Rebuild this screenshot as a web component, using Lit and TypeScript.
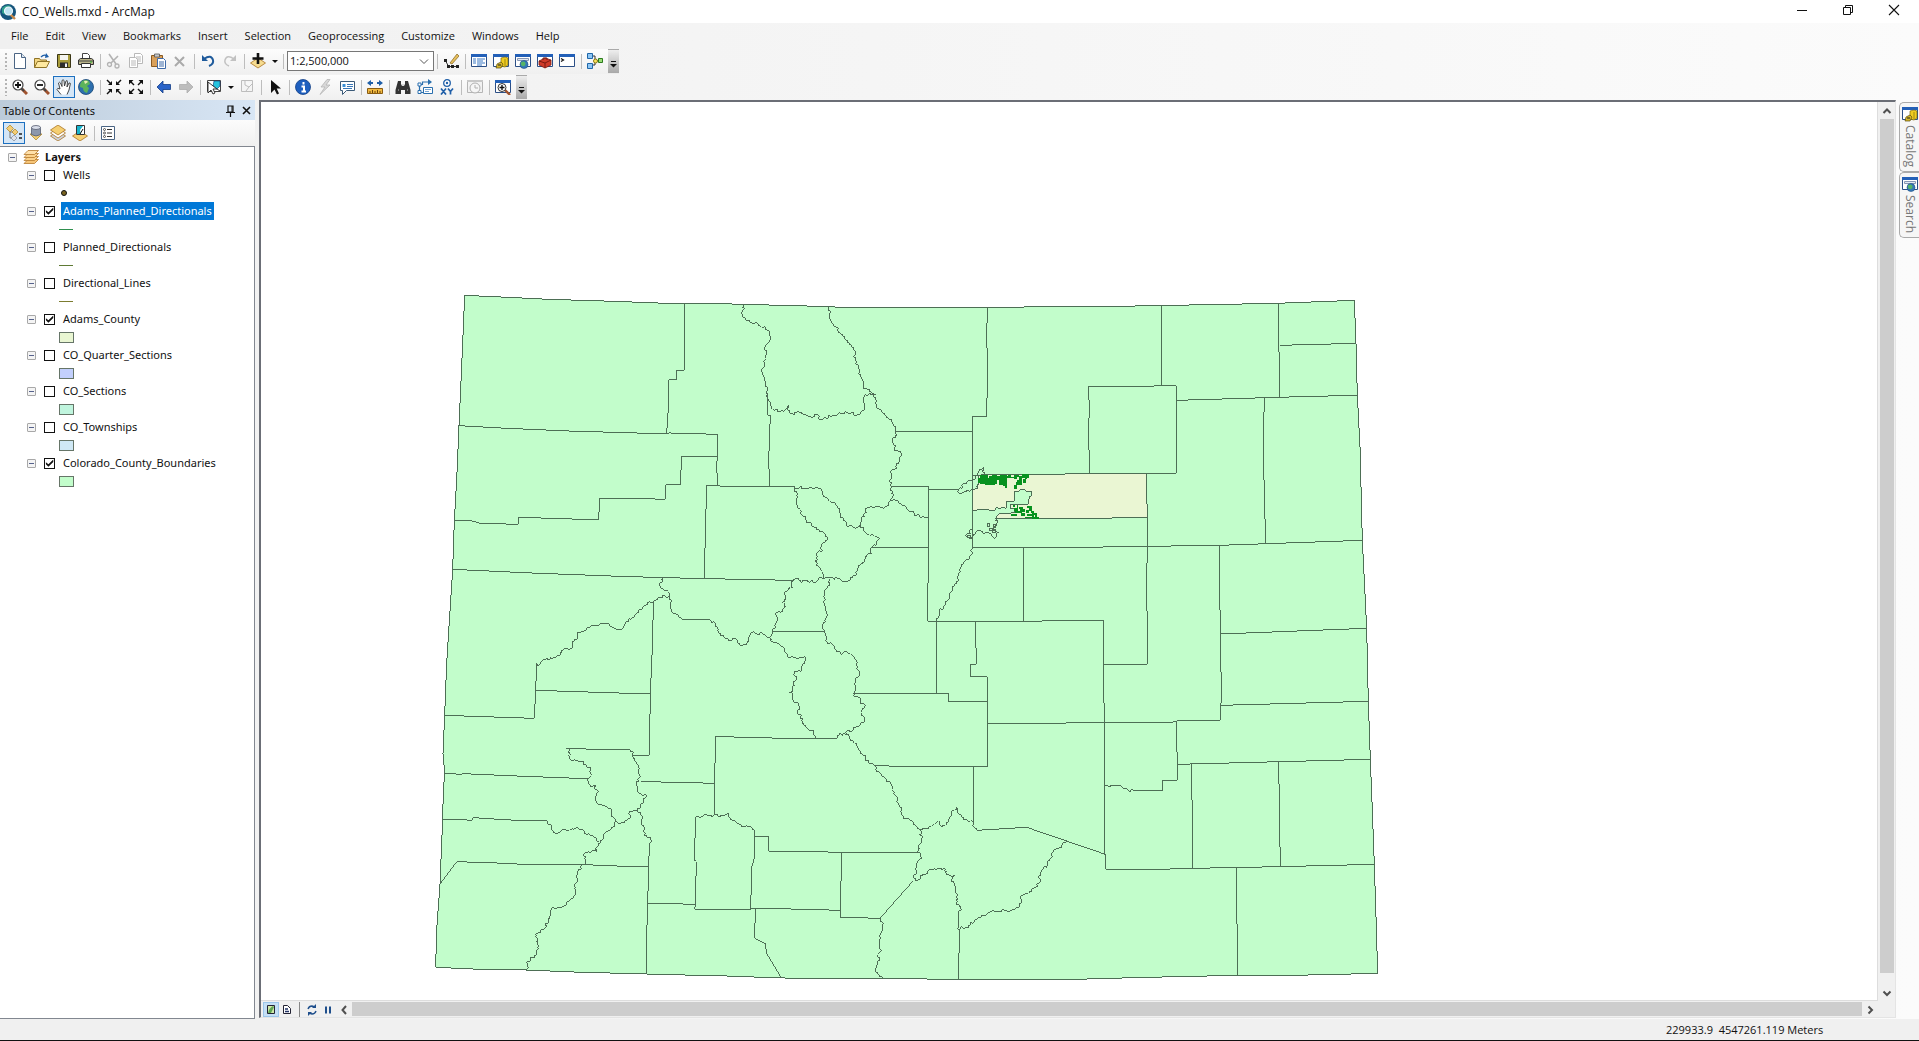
import { LitElement, html, svg, css, type SVGTemplateResult } from "lit";
import { customElement, state } from "lit/decorators.js";
import { classMap } from "lit/directives/class-map.js";

type Pt = [number, number];

/* ---------- map geometry ---------- */

// Tiles of the survey grid: a letter in a point list selects the tile origin.
const TILES: Record<string, Pt> = {
  A: [0, 0], B: [1410, 0], C: [0, 1050], D: [1410, 1050], E: [1530, 510],
};

function parse(list: string): Pt[] {
  let origin: Pt = [0, 0];
  const out: Pt[] = [];
  for (const token of list.trim().split(/\s+/)) {
    if (TILES[token]) { origin = TILES[token]; continue; }
    const [x, y] = token.split(",").map(Number);
    out.push([x + origin[0], y + origin[1]]);
  }
  return out;
}

// Breaks each segment with seeded midpoint displacement, for rivers and ridges.
function roughen(pts: Pt[]): Pt[] {
  let seed = 7;
  const rnd = () => ((seed = (seed * 16807) % 2147483647) / 2147483647) - 0.5;
  const out: Pt[] = [pts[0]];
  const split = (a: Pt, b: Pt) => {
    const dx = b[0] - a[0], dy = b[1] - a[1], len = Math.hypot(dx, dy);
    if (len < 7) { out.push(b); return; }
    const k = rnd() * Math.min(0.9, 12 / len);
    const m: Pt = [(a[0] + b[0]) / 2 - dy * k, (a[1] + b[1]) / 2 + dx * k];
    split(a, m);
    split(m, b);
  };
  for (let i = 1; i < pts.length; i++) split(pts[i - 1], pts[i]);
  return out;
}

const join = (pts: Pt[]) => pts.map((p) => p.map(Math.round).join(",")).join(" ");

const STATE = join(parse(`A 104,46 213,51 357,58 553,64 682,69 903,72 1131,78 1242,82 1440,82
 B 386,81 711,78 1131,70 1235,66 1363,61 1368,190 1372,345 1380,500 1387,781 1393,900 1400,1045
 D 1405,214 1411,388 1417,540 1423,703 1428,860 1433,1030 1235,1035 1012,1036 700,1043 530,1048 175,1048 75,1047
 C 1440,1045 1075,1045 1040,1042 895,1040 887,1036 760,1035 648,1032 430,1026 287,1020 150,1018 85,1015 17,1012
 20,900 30,762 38,568 40,480 44,430 39,370 44,256 50,100 A 57,1040 68,868 73,721 80,600 87,437 95,260`));

const STRAIGHT = [
  "A 765,68 763,270 740,271 739,300 716,299 714,400 710,460",
  "A 87,437 232,445 415,453 655,460 720,459 862,463 862,529 860,560 863,615",
  "A 862,529 754,529 752,615 707,614 706,658 640,656 509,655 506,720 400,716 266,712 265,733 150,730 120,721 73,721",
  "A 68,868 305,879 570,889 705,893 975,899 1090,901",
  "A 823,895 826,760 830,616 890,619 1092,619",
  "A 1012,340 1014,405 1021,406 1016,540 1019,619",
  "A 1398,454 B 217,454", "A 1384,620 B 85,619", "A 1325,802 B 83,802",
  "A 755,1018 838,1018", "A 1028,1054 1183,1056",
  "A 670,965 668,1080 C 665,100 661,192 658,376 608,376",
  "C 320,100 317,181 313,265 220,262 44,256", "C 317,181 505,187 661,192",
  "C 408,355 465,357 600,359", "C 44,430 95,433 100,431 260,438 470,446",
  "C 632,455 750,457 852,460", "C 853,552 855,400 857,319 940,322 1065,325 1220,326",
  "C 38,568 110,570 125,572 130,563 240,570 350,572",
  "C 30,762 80,695 200,699 280,703 440,703 560,708 655,710",
  "C 658,650 656,710 653,820 650,920 648,1032",
  "C 653,820 720,821 797,823", "C 797,562 793,690 799,695 796,823 794,838 962,838 962,835 1080,837 1231,841 1231,862 1350,865",
  "C 973,600 972,690 965,710 962,838", "C 973,619 1015,619 1016,664 1180,666 D 55,667",
  "C 1235,667 1231,841", "C 976,838 974,925 1005,940 1010,970 1052,1040",
  "C 1350,865 D 40,752", "D 175,848 174,897 178,900 176,1048",
  "D 232,601 380,592 613,672", "C 1335,407 D 82,411 262,411", "D 220,411 220,583",
  "B 110,1024 D 110,190", "C 1270,190 D 146,190 146,216 262,214",
  "B 262,82 260,180 263,250 260,409 217,409 217,800",
  "B 785,76 785,317", "B 566,319 700,319 829,317 829,580 740,580",
  "B 566,319 568,400 566,430 568,581", "B 829,361 1000,356 1200,350 1372,346",
  "B 1136,68 1138,352", "B 1139,196 1369,190", "B 1095,353 1091,410 1091,560 1097,792",
  "B 217,802 400,803 480,803 740,799 960,796 1387,781",
  "B 740,580 742,800 740,900 742,1080 D 742,103 612,103",
  "B 370,802 370,1024", "B 85,618 85,800 83,1024 440,1023 610,1021 610,1080 D 611,150 613,280 613,672 617,674 617,718 820,717 880,715 1140,710 1423,703",
  "B 958,796 961,1080 D 964,170 962,270 830,273 815,277 613,277 505,279 262,281",
  "D 262,411 262,140 212,140 212,103 229,103 227,0 B 226,1024",
  "B 962,1062 1399,1045", "D 962,226 1405,214", "D 830,273 832,451 788,451 788,481 705,481",
  "D 832,403 1411,388", "D 875,403 878,715", "D 1136,397 1141,710", "D 1010,712 1012,1036",
  "B 85,628 175,628", "B 217,586 235,586",
].map((s) => join(parse(s)));

const ROUGH = [
  "A 940,74 935,98 960,125 1005,138 1012,150 1022,172 1012,190 1007,230 997,265 1003,300 1012,330 1028,388 1060,395 1077,375 1092,404 1125,402 1145,414 1155,402 1180,416 1215,408 1255,398 1282,405 1303,375 1305,345 1337,343 1340,375 1385,425 1398,455 1390,490 1406,515 1400,565 1383,580 1384,620 1380,662",
  "A 1195,82 1198,110 1245,170 1275,225 1300,325 1320,330 1322,343",
  "A 1380,662 1405,662 B 15,677 30,695 85,711",
  "A 1380,662 1360,685 1305,687 1303,710 1288,738 1255,740 1240,720 1228,685 1195,660 1165,625 1107,624 1092,619",
  "A 1092,619 1100,665 1115,705 1145,730 1175,755 1192,770 1178,790 1178,812 1160,818 1162,850 1180,893",
  "A 1288,738 1305,755 1330,765 1348,775 1325,802 1325,820 1285,860 1250,905 1225,895 1180,895 1150,907 1100,893 1090,903 1088,922 1065,935 1062,985 1040,1010 1028,1050 1025,1078",
  "A 1200,897 1188,928 1188,985 1187,1025 1178,1035 1183,1056 C 1188,30 1210,45 1218,67 1245,65 1280,92 1283,110 1290,135 1278,150 1272,188 1290,210 1303,235 1290,285 1250,312 1228,310 1220,326",
  "A 700,893 687,912 715,935 718,948 670,965 620,1000 565,1048 530,1032 480,1040 435,1078 C 415,60 320,100",
  "A 718,948 720,980 755,1018",
  "A 838,1018 865,1048 870,1060 C 900,32 920,28 940,44 970,5 995,8 1020,32 1050,45 1072,77 1125,80 1128,90 1105,122 1092,125 1088,180 1077,188 1090,212 1105,225 1115,280 1155,323",
  "A 1025,1078 C 1022,30",
  "C 600,359 608,380 625,405 630,490 648,495 640,520 620,543 598,545 597,565 570,580 558,572 535,535 500,518 497,468 480,465 470,447 480,440 480,410 462,397 425,393 408,357",
  "C 350,572 370,608 400,598 455,598 490,620 507,635",
  "C 558,572 540,600 507,640 500,665 462,672 463,703 442,725 435,795 400,830 362,842 355,870 325,910 322,960 290,1020",
  "C 620,543 638,560 645,612 667,632 658,650",
  "C 797,562 853,555 897,550 910,572 940,590 973,600",
  "C 1350,865 1358,900 1350,950 1350,990 1338,1015 1357,1043",
  "C 1250,312 1300,375 1335,407 1382,460 1400,515 1425,565 D 25,565 60,600 65,625 55,667 42,745 48,752 60,738 120,715 155,740 165,738 155,750 168,780 172,815 187,840 175,848",
  "D 60,600 80,597 115,572 127,592 150,560 170,532 190,568 212,572 232,601",
  "D 705,481 670,475 640,467 613,469",
  "D 500,632 460,665 422,735 422,755 385,790 362,797 360,825 340,840 265,848 230,868 200,893 175,898",
  "B 217,802 205,840 190,850 170,910 130,980 110,1022",
  "B 253,584 252,562 238,572 235,585 220,600 205,603 190,612 188,622 175,630 178,640 188,638 200,630 217,628 232,626 235,612",
  "B 287,715 290,735 280,745 298,757 283,775 270,760 240,752 225,762 215,775 200,772 198,765 212,762 210,750 217,745",
].map((s) => join(roughen(parse(s))));

const ADAMS = join(parse(`B 235,586 250,584 500,582 680,582 740,580 740,630 742,713 640,713 630,715 287,715
 290,708 300,700 330,700 345,696 345,686 331,684 331,674 385,673 388,650 394,648 395,635 380,634 375,630 362,628
 356,634 343,636 343,664 320,664 318,685 305,682 300,686 290,682 285,690 270,692 262,688 217,691 217,628 232,626 235,610`));

// Planned directional wells: x, y, width, height in tile E.
const WELLS = [
  [113, 84, 20, 16], [121, 75, 24, 28], [134, 84, 14, 22], [146, 78, 18, 26], [156, 74, 14, 20], [166, 84, 6, 18],
  [172, 78, 10, 12], [180, 74, 20, 16], [178, 88, 12, 18], [190, 84, 10, 24], [186, 78, 20, 6], [196, 96, 6, 19],
  [204, 74, 10, 10], [210, 80, 16, 4], [222, 76, 10, 10], [230, 76, 6, 4], [238, 78, 8, 16], [230, 90, 16, 6], [227, 96, 18, 9], [222, 104, 8, 12],
  [246, 73, 22, 10], [248, 86, 10, 12], [254, 80, 8, 8],
  [218, 164, 8, 6], [222, 174, 10, 8], [230, 166, 4, 18], [236, 170, 14, 6], [240, 178, 16, 8], [226, 184, 20, 6], [244, 188, 12, 10],
  [260, 168, 16, 6], [268, 172, 8, 10], [258, 180, 8, 10], [272, 184, 10, 6], [262, 192, 14, 6], [276, 190, 6, 12],
  [214, 192, 16, 7], [254, 200, 22, 5], [280, 188, 10, 6], [284, 196, 6, 10], [276, 202, 21, 5],
];

const SPECKS = [[262, 732, 8, 8], [280, 734, 7, 8], [268, 745, 12, 7], [278, 750, 9, 9], [204, 766, 9, 7]];

/* ---------- icons, each on a 16 by 16 grid ---------- */

const frame = (body: SVGTemplateResult) => svg`
  <path d="M.5 1.5h15v12H.5z" fill="#fff" stroke="#2c4f86"/><path d="M0 1h16v3H0z" fill="#2360b8"/>${body}`;
const lens = (body: SVGTemplateResult) => svg`
  <path d="M10 10l5 5" stroke="#a0522d" stroke-width="3"/><path d="M9 9l3 3" stroke="#444" stroke-width="2"/>
  <circle cx="6" cy="6" r="5" fill="#fff" stroke="#444" stroke-width="1.2"/>${body}`;
const globe = (x: number, y: number, r: number) => svg`
  <circle cx=${x} cy=${y} r=${r} fill="#3478b8" stroke="#1d4f85" stroke-width=".6"/>
  <circle cx=${x - r / 5} cy=${y - r / 6} r=${r * 0.6} fill="#56b467"/>`;
const sheet = (c: string, x: number, y: number) => svg`
  <path transform="translate(${x} ${y})" d="M.5.5h6l2 2v8h-8z M2 4h5M2 6h5M2 8h5" fill="#fff" stroke=${c}/>`;
const diamond = (y: number, fill: string) => svg`
  <path transform="translate(0 ${y})" d="M8 0l7.500 5L8 10 .5 5z" fill=${fill} stroke="#a87425" stroke-width=".8"/>`;
const arrowIn = (t: string) => svg`<path transform=${t} d="M1 1l4 4" stroke="#111" stroke-width="1.500"/><path transform=${t} d="M6 2v4H2z" fill="#111"/>`;
const arrowOut = (t: string) => svg`<path transform=${t} d="M6 6L2 2" stroke="#111" stroke-width="1.500"/><path transform=${t} d="M1 5.500V1h4.500z" fill="#111"/>`;
const catalog = frame(svg`<path d="M8 5l4-1 3 1v7l-3 2-4-1z" fill="#f0cc20" stroke="#7c6a0c" stroke-width=".7"/>
  <path d="M12 6v7" stroke="#a18a12"/><path d="M4 11l4-2 2 2-2 4H3z" fill="#d6b72a" stroke="#5a4c0a" stroke-width=".7"/><path d="M5 12h3" stroke="#222"/>`);
const searchWin = frame(svg`<path d="M2.500 5.500h11v2h-11z" fill="#e3e9f2" stroke="#8797b4"/>${globe(9, 11.500, 4)}`);

const ICONS: Record<string, SVGTemplateResult> = {
  app: svg`<circle cx="8" cy="8" r="8" fill="#16547c"/><path d="M2 4q4-4 9-2l-3 3-2 6-4-2z" fill="#2f9e8d"/><path d="M10 10l5 5" stroke="#c98a4a" stroke-width="2.400"/><circle cx="8.500" cy="7" r="4" fill="#bfe4f2" stroke="#eef7fb" stroke-width="1.200"/>`,
  new: svg`<path d="M2.500.5h7l4 4v11h-11z" fill="#fff" stroke="#4b6584"/><path d="M9.500.5v4h4" fill="#dfe8f2" stroke="#4b6584"/>`,
  open: svg`<path d="M.5 14.500v-9h5l1 1.500h6v3" fill="#f3d681" stroke="#8f7327"/><path d="M.5 14.500l3-6h12l-3 6z" fill="#ffe9a0" stroke="#8f7327"/><path d="M7 4q3-3 6-1" fill="none" stroke="#1f5fa8" stroke-width="1.300"/><path d="M12 0l3 4-4 1z" fill="#1f5fa8"/>`,
  save: svg`<path d="M1.500 1.500h13v13h-12l-1-1z" fill="#a79b3a" stroke="#3a3616"/><path d="M4 2h8v5H4z" fill="#f4f4f0"/><path d="M4 9.500h8V14H4z" fill="#2d2d2d"/><path d="M9 10.500h2V14H9z" fill="#f4f4f4"/>`,
  print: svg`<path d="M4.500 6V.5h5l2 2V6" fill="#fff" stroke="#444"/><path d="M.5 7l2-1.500h11l2 1.500v4.500H.5z" fill="#b9b48a" stroke="#333"/><path d="M1 8h14" stroke="#444"/><path d="M3.500 10.500h9v4h-9z" fill="#fff" stroke="#333"/><path d="M12 9h2" stroke="#3b3"/>`,
  cut: svg`<path d="M3 1l7 10M12 3L5 10" stroke="#b3b3b3" stroke-width="1.600"/><circle cx="3.500" cy="11.500" r="2" fill="none" stroke="#b3b3b3" stroke-width="1.300"/><circle cx="11" cy="13" r="2" fill="none" stroke="#b3b3b3" stroke-width="1.300"/>`,
  copy: svg`${sheet("#b8b8b8", 6, 0)}${sheet("#b8b8b8", 1, 4)}`,
  paste: svg`<path d="M1.500 2.500h11v11h-11z" fill="#d9a05a" stroke="#8a5a22"/><path d="M4.500 1h5v3h-5z" fill="#c8c8c8" stroke="#555" stroke-width=".8"/>${sheet("#3f6aa8", 7, 5)}`,
  del: svg`<path d="M3 4l9 9M12 4l-9 9" stroke="#aaa" stroke-width="2"/>`,
  undo: svg`<path d="M4 6q7-5 9 1 1 4-4 6" fill="none" stroke="#1f5b9c" stroke-width="2"/><path d="M2 2v6h6z" fill="#1f5b9c"/>`,
  redo: svg`<path d="M12 6Q5 1 3 7q-1 4 4 6" fill="none" stroke="#c2c2c2" stroke-width="1.500"/><path d="M14 2v6H8z" fill="#c2c2c2"/>`,
  add: svg`${diamond(5, "#f6dc90")}<path d="M8 0v11M2.500 5.500h11" stroke="#111" stroke-width="2.600"/>`,
  edit: svg`<path d="M2.500 7.500l3 6h9" fill="none" stroke="#333"/><path d="M1 6h3v3H1zM4 12h3v3H4zM8 12h3v3H8zM13 12h3v3h-3z" fill="#222"/><path d="M7 10l7-9 2 2-7 8z" fill="#e6bf5c" stroke="#84611b" stroke-width=".7"/>`,
  table: frame(svg`<path d="M2 6h3M2 8h3M2 10h3M6 6h8M6 8h6M6 10h8M6 12h5" stroke="#3b78c4"/>`),
  catalog,
  search: searchWin,
  toolbox: frame(svg`<path d="M2 8l6-3 6 2v5l-6 3-6-3z" fill="#cf3b2a" stroke="#7a1a10" stroke-width=".8"/><path d="M2 8l6 2 6-3M8 10v5M6 7V5h4v2" fill="none" stroke="#7a1a10"/>`),
  python: frame(svg`<path d="M2 5.500l2.500 1.500L2 8.500" fill="none" stroke="#111" stroke-width="1.200"/>`),
  model: svg`<path d="M5 3h3v9H5M8 7.500h4" fill="none" stroke="#333"/><path d="M.5.5h5v5h-5zM.5 10.500h5v5h-5z" fill="#8ec6f4" stroke="#1f66a8"/><circle cx="8.500" cy="8" r="2" fill="#f8e45c" stroke="#8a7610"/><path d="M11.500 5.500h4v4h-4z" fill="#9ade76" stroke="#2d7a1e"/>`,
  zoomin: lens(svg`<path d="M6 3v6M3 6h6" stroke="#111" stroke-width="1.800"/>`),
  zoomout: lens(svg`<path d="M3 6h6" stroke="#111" stroke-width="1.800"/>`),
  pan: svg`<path d="M5 15.500L1 10.500q0-2 3-.5L2.500 4q1-1.500 2 0L6 7.500 6 1.500q1.200-1.500 2 0l.5 5.500 1.500-5q1.500-1 1.500.5L11 8l2-4q1.500-.5 1.300 1L13 11l-2 4.500" fill="#fff" stroke="#333" stroke-width=".9"/>`,
  globe: svg`<circle cx="8" cy="8" r="7.500" fill="#2d6fae" stroke="#174675" stroke-width=".8"/><path d="M4 2q4-2 7 0l1 3-3 2 2 2-2 5q-4-1-4-5L2 8q0-4 2-6z" fill="#5cb35a"/><path d="M6 2q3-1 4 1L7 5z" fill="#e8edb4"/>`,
  fixin: svg`${arrowIn("translate(0 0)")}${arrowIn("translate(16 0) scale(-1 1)")}${arrowIn("translate(0 16) scale(1 -1)")}${arrowIn("translate(16 16) scale(-1 -1)")}`,
  fixout: svg`${arrowOut("translate(0 0)")}${arrowOut("translate(16 0) scale(-1 1)")}${arrowOut("translate(0 16) scale(1 -1)")}${arrowOut("translate(16 16) scale(-1 -1)")}`,
  back: svg`<path d="M1 8l6-6v3.500h7.500v5H7V14z" fill="#2a63c8" stroke="#123c86" stroke-width=".8"/>`,
  forward: svg`<path d="M15 8L9 2v3.500H1.500v5H9V14z" fill="#bdbdbd" stroke="#adadad" stroke-width=".8"/>`,
  select: svg`<path d="M1.500 1.500h13v11h-13z" fill="#fff" stroke="#444"/><path d="M8 2h6v5l-3 3-4-3z" fill="#27c3dd" stroke="#137" stroke-width=".6"/><path d="M11 10l3 2" stroke="#333"/><path d="M2 3v11l3-3 2 4 2-1-2-4h4z" fill="#fff" stroke="#222" stroke-width=".9"/>`,
  clear: svg`<path d="M2.500 1.500h11v11h-11zM6 2v4l4 2 3-3M10 8l-3 4" fill="#f4f4f4" stroke="#bdbdbd"/>`,
  pointer: svg`<path d="M4 1v13l3.500-3.500L10 15.500l2-1-2.300-5H14z" fill="#111"/>`,
  info: svg`<circle cx="8" cy="8" r="7.500" fill="#1e5fbf" stroke="#123f85" stroke-width=".8"/><path d="M8.500 3v2.500M6.500 7.500h2.500v5M6.500 12.500h4.500" fill="none" stroke="#fff" stroke-width="2"/>`,
  bolt: svg`<path d="M10 .5L4 8h4l-5 7.500L13 6H9l4-5.500z" fill="#d8d8d8" stroke="#b5b5b5" stroke-width=".8"/>`,
  popup: svg`<path d="M1.500 2.500h14v9h-8l-4 4v-4h-2z" fill="#fff" stroke="#3b5a78"/><path d="M3.500 5h3v3h-3z" fill="#3a8fd6"/><path d="M8 5.500h6M8 7.500h6M4 9.500h9" stroke="#3a78b8"/>`,
  measure: svg`<path d="M.5 9.500h15v5H.5z" fill="#f0b840" stroke="#8a5c12"/><path d="M3 12v2M5.500 11v3M8 12v2M10.500 11v3M13 12v2" stroke="#6b450a"/><path d="M0 4l4-3v2h2v2H4v2zM16 4l-4-3v2h-2v2h2v2z" fill="#1f5fa8"/>`,
  find: svg`<path d="M3 2h3v3l1 2h2l1-2V2h3l2.500 9v4H10v-4H6v4H.5v-4z" fill="#333"/><path d="M3 11h1M12 11h1M7 6h2" stroke="#bbb"/>`,
  route: svg`<path d="M2.500 11V5.500h3V3H12M2.500 13.500h4" fill="none" stroke="#2a6fae" stroke-width="1.200"/><path d="M11 0l4 3-4 3z" fill="#2a6fae"/><path d="M1 4h3v3H1zM1 11.500h3v3H1z" fill="#fff" stroke="#2a6fae"/><path d="M6.500 8.500h9v6h-9z" fill="#fff" stroke="#2a6fae"/><path d="M8 10.500h6M8 12.500h4" stroke="#7aa8d4"/>`,
  xy: svg`<circle cx="8" cy="4" r="3.300" fill="#fff" stroke="#1f5fa8" stroke-width="1.300"/><circle cx="8" cy="4" r="1.200" fill="#1f5fa8"/><path d="M2 9.500l5 6M7 9.500l-5 6M9 9.500l2.500 3 2.500-3M11.500 12v3.500" fill="none" stroke="#1f5fa8" stroke-width="1.700"/>`,
  time: svg`<path d="M.5 1.500h15v12H.5z" fill="#f2f2f2" stroke="#b5b5b5"/><path d="M0 1h16v2H0z" fill="#c8c8c8"/><circle cx="8" cy="9" r="5" fill="#f6f6f6" stroke="#b0b0b0"/><path d="M8 6v3h3" fill="none" stroke="#b0b0b0"/>`,
  viewer: frame(svg`<path d="M10 11l5 5" stroke="#a0522d" stroke-width="2.400"/><circle cx="7" cy="8.500" r="4" fill="#fff" stroke="#333"/><path d="M7 6v5M4.500 8.500h5" stroke="#111" stroke-width="1.400"/>`),
  layers: svg`<path d="M1 14.500l4-4h10.500l-4 4z" fill="#f6c577" stroke="#b67a2c" stroke-width=".8"/><path d="M1 11.500l4-4h10.500l-4 4z" fill="#fbd28c" stroke="#b67a2c" stroke-width=".8"/><path d="M1 8.500l4-4h10.500l-4 4z" fill="#fbd28c" stroke="#b67a2c" stroke-width=".8"/><path d="M1 5.500l4-4h10.500l-4 4z" fill="#ffe0a8" stroke="#b67a2c" stroke-width=".8"/>`,
  order: svg`<path d="M4 6v7h6M4 7h5" fill="none" stroke="#777"/><path d="M4 0l3.500 3.500L4 7 .5 3.500z" fill="#f3cd74" stroke="#b08a35" stroke-width=".8"/><path d="M9 4l3 3-3 3-3-3z" fill="#f3cd74" stroke="#b08a35" stroke-width=".8"/><path d="M8 10l3 3-3 3-3-3z" fill="#dfe3ea" stroke="#8b93a3" stroke-width=".8"/><path d="M13 9h3M13 13h3" stroke="#222" stroke-width="1.300"/>`,
  source: svg`<path d="M2 9h12l-6 6z" fill="#f3cd74" stroke="#b08a35" stroke-width=".8"/><path d="M3.500 2.500v7q4.500 3 9 0v-7z" fill="#8d97ab" stroke="#555d70" stroke-width=".8"/><ellipse cx="8" cy="2.500" rx="4.500" ry="2" fill="#d9deea" stroke="#555d70" stroke-width=".8"/>`,
  visible: svg`${diamond(6, "#cfd3dc")}${diamond(3, "#fff")}${diamond(0, "#f5cf72")}`,
  selection: svg`${diamond(6, "#f5cf72")}<path d="M4.500.5h8v9h-8z" fill="#fff" stroke="#333"/><path d="M5 1h6L8 5l1 4H5z" fill="#18b4cc"/><path d="M11 4l-3 5" stroke="#111"/>`,
  options: svg`<path d="M1.500 1.500h13v13h-13z" fill="#fff" stroke="#4b6584"/><circle cx="4.500" cy="4.500" r="1" fill="none" stroke="#333" stroke-width=".8"/><circle cx="4.500" cy="8" r="1" fill="none" stroke="#333" stroke-width=".8"/><circle cx="4.500" cy="11.500" r="1" fill="none" stroke="#333" stroke-width=".8"/><path d="M7 4.500h5M7 8h5M7 11.500h5" stroke="#333"/>`,
  pin: svg`<path d="M6 3h5v6H6zM4 9.500h9M8.500 10v4" fill="none" stroke="#111" stroke-width="1.200"/><path d="M10 3v6" stroke="#111"/>`,
  close: svg`<path d="M5 4l7 7M12 4l-7 7" stroke="#111" stroke-width="1.600"/>`,
  winmin: svg`<path d="M3 8.500h10" stroke="#111"/>`,
  winmax: svg`<path d="M3.500 5.500h7v7h-7zM5.500 5V3.500h7v7H11" fill="none" stroke="#111"/>`,
  winclose: svg`<path d="M3 3l10 10M13 3L3 13" stroke="#111" stroke-width="1.100"/>`,
  up: svg`<path d="M4.500 10L8 6.500l3.500 3.500" fill="none" stroke="#505050" stroke-width="2"/>`,
  down: svg`<path d="M4.500 6.500L8 10l3.500-3.500" fill="none" stroke="#505050" stroke-width="2"/>`,
  left: svg`<path d="M10 4L6.500 8l3.500 4" fill="none" stroke="#505050" stroke-width="2"/>`,
  right: svg`<path d="M6.500 4.500L10 8l-3.500 3.500" fill="none" stroke="#505050" stroke-width="2"/>`,
  combo: svg`<path d="M4 6.500L8 10.500l4-4" fill="none" stroke="#555"/>`,
  dataview: svg`<path d="M4.500 3.500h7v8h-7z" fill="#cfe8a8" stroke="#223"/><path d="M5 11q1-5 5-7l1 1-3 6z" fill="#5ea552"/>`,
  layout: svg`<path d="M4.500 3.500h4l3 3v5h-7z" fill="#fff" stroke="#223"/><path d="M6 7h3M6 9.500h4" stroke="#236" stroke-width="1.300"/>`,
  refresh: svg`<path d="M4 7q1-3 4-3l3 1M12 9q-1 3-4 3l-3-1" fill="none" stroke="#1f4f8c" stroke-width="1.400"/><path d="M12 2v4H8zM4 14v-4h4z" fill="#1f4f8c"/>`,
  pause: svg`<path d="M6 4.500v7M10 4.500v7" stroke="#1f4f8c" stroke-width="2"/>`,
};

const icon = (name: string) => html`<svg class="icon" width="16" height="16" viewBox="0 0 16 16" aria-hidden="true">${ICONS[name]}</svg>`;

/* ---------- content ---------- */

const MENUS = ["File", "Edit", "View", "Bookmarks", "Insert", "Selection", "Geoprocessing", "Customize", "Windows", "Help"];

type Tool = { icon: string; label: string } | "|" | "v";
const t = (name: string, label: string): Tool => ({ icon: name, label });

const STANDARD_A: Tool[] = [t("new", "New"), t("open", "Open"), t("save", "Save"), t("print", "Print"), "|",
  t("cut", "Cut"), t("copy", "Copy"), t("paste", "Paste"), t("del", "Delete"), "|", t("undo", "Undo"), t("redo", "Redo"), "|", t("add", "Add Data"), "v", "|"];
const STANDARD_B: Tool[] = ["|", t("edit", "Editor Toolbar"), "|", t("table", "Table Of Contents"), t("catalog", "Catalog"),
  t("search", "Search"), t("toolbox", "ArcToolbox"), t("python", "Python"), "|", t("model", "ModelBuilder")];
const TOOLS: Tool[] = [t("zoomin", "Zoom In"), t("zoomout", "Zoom Out"), t("pan", "Pan"), t("globe", "Full Extent"), "|",
  t("fixin", "Fixed Zoom In"), t("fixout", "Fixed Zoom Out"), "|", t("back", "Previous Extent"), t("forward", "Next Extent"), "|",
  t("select", "Select Features"), "v", t("clear", "Clear Selection"), "|", t("pointer", "Select Elements"), "|",
  t("info", "Identify"), t("bolt", "Hyperlink"), t("popup", "HTML Popup"), "|", t("measure", "Measure"), "|",
  t("find", "Find"), t("route", "Find Route"), t("xy", "Go To XY"), "|", t("time", "Time Slider"), "|", t("viewer", "Viewer Window")];
const TOC_TOOLS: Tool[] = [t("order", "List By Drawing Order"), t("source", "List By Source"), t("visible", "List By Visibility"),
  t("selection", "List By Selection"), "|", t("options", "Options")];

interface Layer { name: string; on: boolean; kind: "point" | "line" | "fill"; color: string }

@customElement("app-root")
export class AppRoot extends LitElement {
  @state() private tool = "pan";
  @state() private selected = "Adams_Planned_Directionals";
  @state() private layers: Layer[] = [
    { name: "Wells", on: false, kind: "point", color: "#7a6420" },
    { name: "Adams_Planned_Directionals", on: true, kind: "line", color: "#2f8f4e" },
    { name: "Planned_Directionals", on: false, kind: "line", color: "#5f7a35" },
    { name: "Directional_Lines", on: false, kind: "line", color: "#7c7c30" },
    { name: "Adams_County", on: true, kind: "fill", color: "#e9f6d2" },
    { name: "CO_Quarter_Sections", on: false, kind: "fill", color: "#c2cffc" },
    { name: "CO_Sections", on: false, kind: "fill", color: "#c0f5de" },
    { name: "CO_Townships", on: false, kind: "fill", color: "#cfe8f5" },
    { name: "Colorado_County_Boundaries", on: true, kind: "fill", color: "#c2fdcb" },
  ];

  static styles = css`
    :host { display: flex; flex-direction: column; height: 100vh; box-sizing: border-box; overflow: hidden;
      border-bottom: 1px solid #111; font: 11px/18px "Open Sans", "Noto Sans", sans-serif; color: #111;
      background: linear-gradient(90deg, #f0f0f0, #fbfbfb); }
    * { box-sizing: border-box; }
    button, select { font: inherit; color: inherit; }
    button { padding: 0; border: 1px solid transparent; background: none; display: flex; align-items: center; justify-content: center; }
    .icon { display: block; flex: none; }
    .title { display: flex; align-items: center; height: 23px; padding-right: 2px; background: #fff; font-size: 12px; }
    .title h1 { flex: 1; margin: 0 6px; font: inherit; }
    .title button { width: 46px; height: 23px; padding-bottom: 4px; }
    .menu { display: flex; gap: 3px; height: 25px; padding: 0 4px; align-items: center; }
    .menu button { height: 22px; padding: 0 6px; }
    .bar { display: flex; align-items: center; height: 26px; }
    .strip { display: flex; align-items: center; height: 25px; background: linear-gradient(#fcfcfc, #f0f0f0); }
    .grip { width: 2px; height: 17px; margin: 0 2px 0 5px; background: repeating-linear-gradient(#b4b4b4 0 2px, transparent 2px 4px); }
    .tool { width: 22px; height: 22px; flex: none; }
    .tool.on { border-color: #1d70c0; background: #d5e6f6; }
    .sep { width: 1px; height: 15px; margin: 0 2px 0 3px; background: #bdbdbd; flex: none; }
    .drop { width: 11px; height: 22px; }
    .drop::before { content: ""; border: 3px solid transparent; border-top-color: #111; border-bottom: 0; }
    .more { width: 11px; height: 25px; margin-left: 2px; align-items: flex-end; padding-bottom: 4px; background: linear-gradient(#eee, #a8a8a8); }
    .scale { display: flex; align-items: center; position: relative; margin-left: 1px; }
    .scale select { width: 147px; height: 20px; padding: 0 2px; border: 1px solid #777; border-radius: 0; background: #fff; appearance: none; font-size: 11px; }
    .scale .icon { position: absolute; right: 2px; pointer-events: none; }
    .work { flex: 1; display: flex; min-height: 0; }
    .toc { width: 255px; flex: none; display: flex; flex-direction: column; font-family: "Noto Sans", "Open Sans", sans-serif; }
    .head { display: flex; align-items: center; height: 20px; padding: 1px 1px 0 3px; background: linear-gradient(90deg, #bccbda, #d8e6f5); }
    .head h2 { flex: 1; margin: 0; font: inherit; }
    .head button { width: 16px; height: 18px; }
    .toctools { display: flex; align-items: center; height: 26px; padding-left: 3px; background: linear-gradient(#fcfcfc, #f0f0f0); }
    .tree { flex: 1; margin: 0; padding: 1px 0 0; list-style: none; background: #fff; border: 1px solid #828790; border-left: 0; }
    .row { display: flex; align-items: center; height: 18px; }
    .root { padding-left: 8px; font-weight: 700; gap: 6px; }
    .child { padding-left: 27px; }
    .exp { width: 9px; height: 9px; flex: none; border: 1px solid #a8a8a8; border-radius: 1px; background: linear-gradient(#56628c, #56628c) center / 5px 1px no-repeat #f4f4f4; }
    .child .exp { margin-right: 8px; }
    .child input { appearance: none; width: 11px; height: 11px; margin: 0 6px 0 0; border: 1px solid #111; background: #fff; }
    .child input:checked::before { content: ""; display: block; width: 9px; height: 9px; background: #111;
      clip-path: polygon(10% 42%, 10% 65%, 38% 92%, 92% 38%, 92% 12%, 38% 64%); }
    .name { padding: 0 2px; }
    .name.on { background: #0078d7; color: #fff; }
    .symbol { padding-left: 59px; }
    .dot { width: 6px; height: 6px; margin-left: 2px; background: #7a6420; border: 1px solid #111; border-radius: 50%; }
    .line { width: 14px; height: 1px; }
    .fill { width: 15px; height: 11px; border: 1px solid #667568; }
    .mapframe { flex: 1; min-width: 0; display: grid; grid-template: minmax(0, 1fr) 16px / minmax(0, 1fr) 17px;
      margin: 0 3px 1px 4px; border: 1px solid #e4e4e4; border-top: 2px solid #6b6e76; border-left: 2px solid #6b6e76; background: #f0f0f0; }
    .map { display: block; width: 100%; height: 100%; background: #fff; border-right: 1px solid #ddd; border-bottom: 1px solid #ddd; }
    .vscroll { display: flex; flex-direction: column; align-items: center; padding: 1px 1px 0 2px; }
    .vscroll button { width: 14px; height: 16px; }
    .thumb { flex: 1; background: #cdcdcd; align-self: stretch; }
    .vscroll .thumb { margin-bottom: 12px; }
    .hscroll { display: flex; align-items: center; padding: 1px 0 0 2px; }
    .hscroll button { width: 16px; height: 15px; }
    .hscroll .sep { margin: 0 4px; background: #888; }
    .hscroll .on { background: #c4dff5; border-color: #9cc6ea; }
    .hscroll .thumb { height: 14px; }
    .dock { width: 20px; flex: none; display: flex; flex-direction: column; padding-top: 2px; }
    .dock button { writing-mode: vertical-rl; gap: 3px; justify-content: flex-start; padding: 3px 0 4px; border: 1px solid #aaa; border-right: 0; border-radius: 5px 0 0 5px; background: #f6f6f6; color: #777; font-size: 12px; }
    .status { display: flex; justify-content: flex-end; height: 21px; align-items: center; background: #f0f0f0; }
    .status output { width: 253px; white-space: pre; }
  `;

  private tools(list: Tool[]) {
    return list.map((item) => item === "|" ? html`<span class="sep"></span>`
      : item === "v" ? html`<button class="drop" aria-label="More choices"></button>`
      : html`<button class=${classMap({ tool: true, on: item.icon === this.tool || item.icon === "order" })}
          aria-label=${item.label} @click=${() => (this.tool = item.icon)}>${icon(item.icon)}</button>`);
  }

  private more() {
    return html`<button class="more" aria-label="Toolbar options"><svg class="icon" width="7" height="8" viewBox="0 0 7 8"><path d="M1 .5h5" stroke="#111"/><path d="M0 3h7L3.500 6.500z" fill="#111"/></svg></button>`;
  }

  private toggle(layer: Layer) {
    this.layers = this.layers.map((l) => (l === layer ? { ...l, on: !l.on } : l));
  }

  private shown(name: string) {
    return this.layers.some((l) => l.name === name && l.on);
  }

  private symbol(l: Layer) {
    return l.kind === "point" ? html`<span class="dot"></span>`
      : html`<span class=${l.kind} style="background:${l.color}"></span>`;
  }

  private map() {
    return html`<svg class="map" role="img" aria-label="Colorado county map" shape-rendering="crispEdges">
      <g transform="translate(169 178) scale(.33333)" fill="none" stroke="#4d6e55" stroke-width="3">
        ${this.shown("Colorado_County_Boundaries") ? svg`
          <polygon points=${STATE} fill="#c2fdcb"></polygon>
          ${[...STRAIGHT, ...ROUGH].map((p) => svg`<polyline points=${p}></polyline>`)}
          ${SPECKS.map(([x, y, w, h]) => svg`<rect x=${x + 1410} y=${y} width=${w} height=${h}></rect>`)}` : null}
        ${this.shown("Adams_County") ? svg`<polygon points=${ADAMS} fill="#eaf6d3"></polygon>` : null}
        ${this.shown("Adams_Planned_Directionals") ? svg`<g fill="#07921f" stroke="none">
          ${WELLS.map(([x, y, w, h]) => svg`<rect x=${x + 1530} y=${y + 510} width=${w} height=${h}></rect>`)}</g>` : null}
      </g>
    </svg>`;
  }

  render() {
    return html`
      <header class="title">${icon("app")}<h1>CO_Wells.mxd - ArcMap</h1>
        <button aria-label="Minimize">${icon("winmin")}</button>
        <button aria-label="Restore">${icon("winmax")}</button>
        <button aria-label="Close">${icon("winclose")}</button>
      </header>
      <nav class="menu">${MENUS.map((m) => html`<button>${m}</button>`)}</nav>
      <div class="bar"><div class="strip"><span class="grip"></span>${this.tools(STANDARD_A)}
        <label class="scale"><select aria-label="Map scale"><option>1:2,500,000</option><option>1:1,000,000</option></select>${icon("combo")}</label>
        ${this.tools(STANDARD_B)}${this.more()}</div></div>
      <div class="bar"><div class="strip"><span class="grip"></span>${this.tools(TOOLS)}${this.more()}</div></div>
      <main class="work">
        <aside class="toc">
          <div class="head"><h2>Table Of Contents</h2><button aria-label="Auto hide">${icon("pin")}</button><button aria-label="Close panel">${icon("close")}</button></div>
          <div class="toctools">${this.tools(TOC_TOOLS)}</div>
          <ul class="tree">
            <li class="row root"><span class="exp"></span>${icon("layers")}<span>Layers</span></li>
            ${this.layers.map((l, i) => html`<li>
              <div class="row child"><span class="exp"></span>
                <input type="checkbox" id="layer-${i}" .checked=${l.on} @change=${() => this.toggle(l)}>
                <label for="layer-${i}" class=${classMap({ name: true, on: l.name === this.selected })}>${l.name}</label></div>
              <div class="row symbol">${this.symbol(l)}</div></li>`)}
          </ul>
        </aside>
        <section class="mapframe">
          ${this.map()}
          <div class="vscroll"><button aria-label="Scroll up">${icon("up")}</button><span class="thumb"></span><button aria-label="Scroll down">${icon("down")}</button></div>
          <div class="hscroll">
            <button class="on" aria-label="Data view">${icon("dataview")}</button><button aria-label="Layout view">${icon("layout")}</button>
            <span class="sep"></span><button aria-label="Refresh">${icon("refresh")}</button><button aria-label="Pause drawing">${icon("pause")}</button>
            <button aria-label="Scroll left">${icon("left")}</button><span class="thumb"></span><button aria-label="Scroll right">${icon("right")}</button>
          </div>
        </section>
        <aside class="dock"><button>${icon("catalog")}Catalog</button><button>${icon("search")}Search</button></aside>
      </main>
      <footer class="status"><output>229933.9  4547261.119 Meters</output></footer>
    `;
  }
}
